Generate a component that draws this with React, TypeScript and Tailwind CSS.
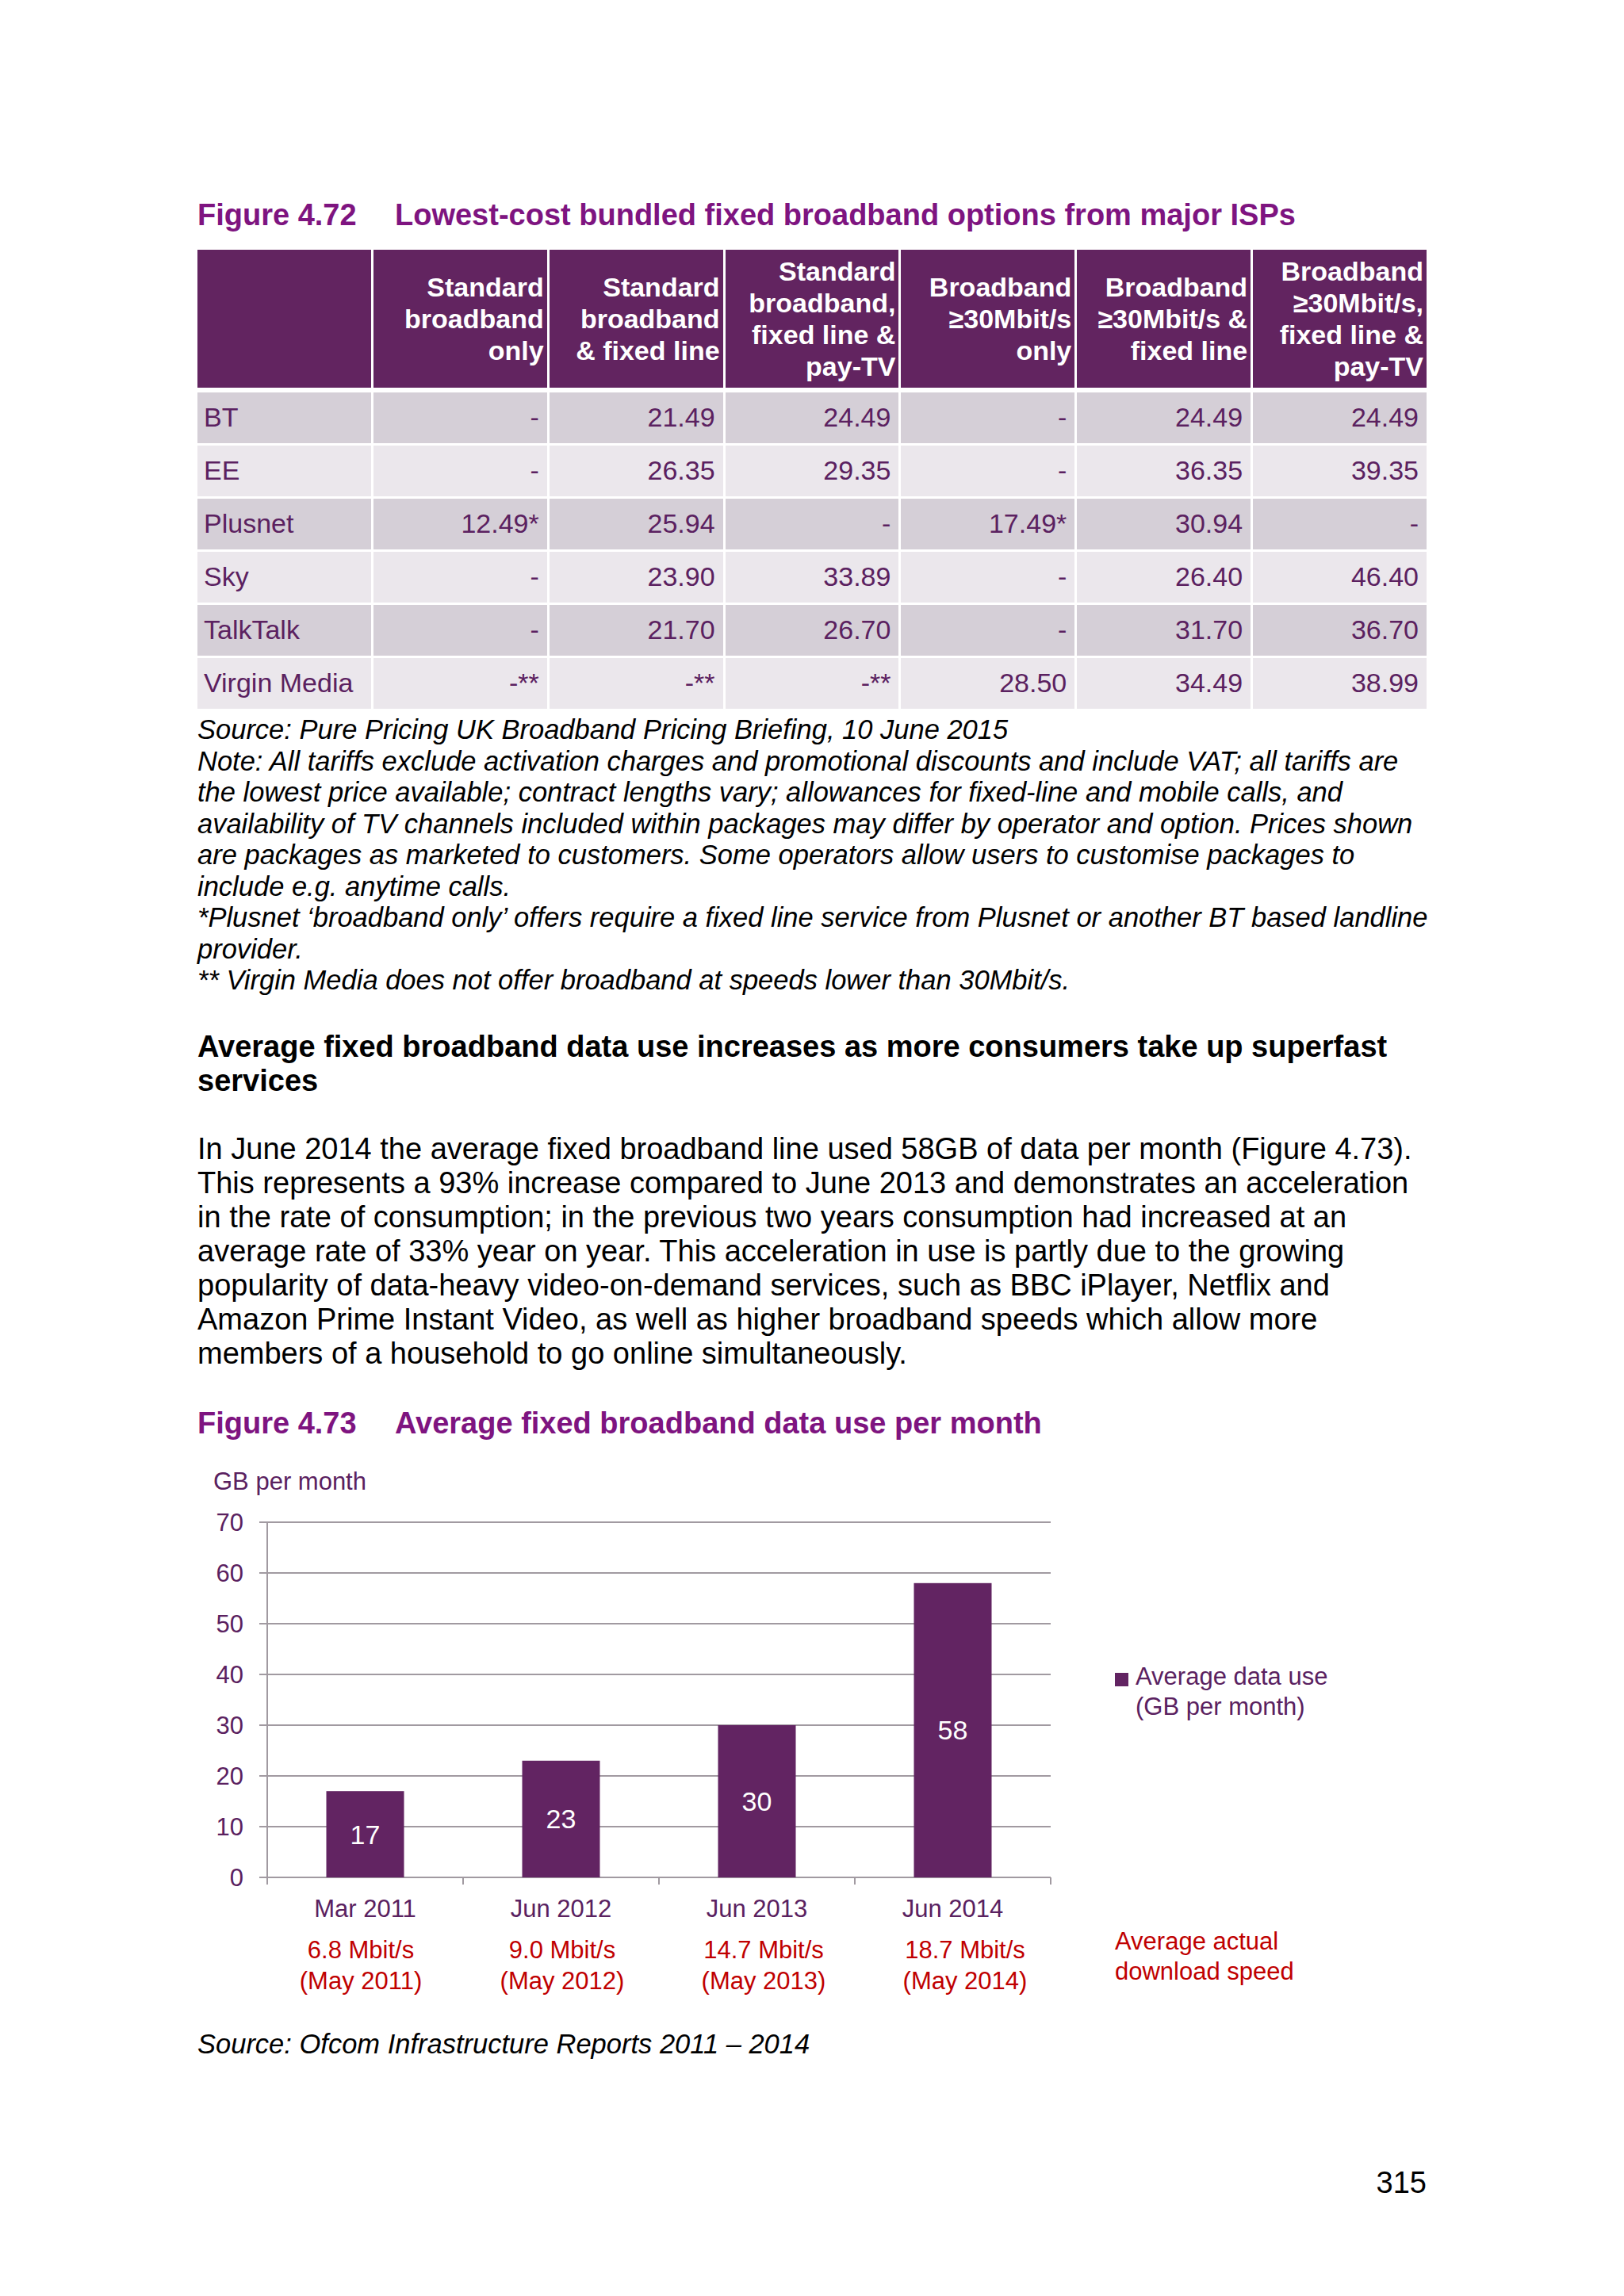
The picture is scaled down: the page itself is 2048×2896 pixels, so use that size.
import React from "react";

const FONT = "font-['Liberation_Sans',Arial,Helvetica,sans-serif]";

const headers: string[][] = [
  ["Standard", "broadband", "only"],
  ["Standard", "broadband", "& fixed line"],
  ["Standard", "broadband,", "fixed line &", "pay-TV"],
  ["Broadband", "≥30Mbit/s", "only"],
  ["Broadband", "≥30Mbit/s &", "fixed line"],
  ["Broadband", "≥30Mbit/s,", "fixed line &", "pay-TV"],
];

const rows: { isp: string; values: string[] }[] = [
  { isp: "BT", values: ["-", "21.49", "24.49", "-", "24.49", "24.49"] },
  { isp: "EE", values: ["-", "26.35", "29.35", "-", "36.35", "39.35"] },
  { isp: "Plusnet", values: ["12.49*", "25.94", "-", "17.49*", "30.94", "-"] },
  { isp: "Sky", values: ["-", "23.90", "33.89", "-", "26.40", "46.40"] },
  { isp: "TalkTalk", values: ["-", "21.70", "26.70", "-", "31.70", "36.70"] },
  { isp: "Virgin Media", values: ["-**", "-**", "-**", "28.50", "34.49", "38.99"] },
];

const notes = [
  "Source: Pure Pricing UK Broadband Pricing Briefing, 10 June 2015",
  "Note: All tariffs exclude activation charges and promotional discounts and include VAT; all tariffs are",
  "the lowest price available; contract lengths vary; allowances for fixed-line and mobile calls, and",
  "availability of TV channels included within packages may differ by operator and option. Prices shown",
  "are packages as marketed to customers. Some operators allow users to customise packages to",
  "include e.g. anytime calls.",
  "*Plusnet \u2018broadband only\u2019 offers require a fixed line service from Plusnet or another BT based landline",
  "provider.",
  "** Virgin Media does not offer broadband at speeds lower than 30Mbit/s.",
];

const bodyLines = [
  "In June 2014 the average fixed broadband line used 58GB of data per month (Figure 4.73).",
  "This represents a 93% increase compared to June 2013 and demonstrates an acceleration",
  "in the rate of consumption; in the previous two years consumption had increased at an",
  "average rate of 33% year on year. This acceleration in use is partly due to the growing",
  "popularity of data-heavy video-on-demand services, such as BBC iPlayer, Netflix and",
  "Amazon Prime Instant Video, as well as higher broadband speeds which allow more",
  "members of a household to go online simultaneously.",
];

const usage = [
  { label: "Mar 2011", value: 17, speed: "6.8 Mbit/s", month: "(May 2011)" },
  { label: "Jun 2012", value: 23, speed: "9.0 Mbit/s", month: "(May 2012)" },
  { label: "Jun 2013", value: 30, speed: "14.7 Mbit/s", month: "(May 2013)" },
  { label: "Jun 2014", value: 58, speed: "18.7 Mbit/s", month: "(May 2014)" },
];

// chart geometry, svg coordinates
const ZERO_Y = 528;
const UNIT = 6.4;
const AXIS_X = 88;
const CAT_W = 247;
const BAR_W = 98;
const GRID = "#a19aa1";
const PURPLE_TEXT = "#5a2160";

function FigureTitle({ num, title }: { num: string; title: string }) {
  return (
    <h2 className="flex text-[38px] leading-[44px] font-bold text-[#7e1480]">
      <span className="w-[249px]">{num}</span>
      <span>{title}</span>
    </h2>
  );
}

function PricingTable() {
  return (
    <div className="mt-[22px] w-[1550px]">
      <div className="grid grid-cols-7 gap-x-[3px] h-[174px]">
        <div className="bg-[#622460]" />
        {headers.map((lines, i) => (
          <div
            key={i}
            className="bg-[#622460] flex flex-col justify-center items-end pr-[4px] text-white font-bold text-[34px] leading-[40px] text-right"
          >
            {lines.map((line) => (
              <span key={line} className="whitespace-nowrap">
                {line}
              </span>
            ))}
          </div>
        ))}
      </div>
      <div className="mt-[6px] flex flex-col gap-y-[3px]">
        {rows.map((row, r) => (
          <div
            key={row.isp}
            className="grid grid-cols-7 gap-x-[3px] h-[64px] text-[34px] leading-[40px] text-[#5b2160]"
          >
            <div
              className={`${r % 2 === 0 ? "bg-[#d5cfd7]" : "bg-[#ebe7ec]"} flex items-center pl-[8px] pb-[3px] whitespace-nowrap`}
            >
              {row.isp}
            </div>
            {row.values.map((v, i) => (
              <div
                key={i}
                className={`${r % 2 === 0 ? "bg-[#d5cfd7]" : "bg-[#ebe7ec]"} flex items-center justify-end pr-[10px] pb-[3px] whitespace-nowrap`}
              >
                {v}
              </div>
            ))}
          </div>
        ))}
      </div>
    </div>
  );
}

function UsageChart() {
  const ticks = [0, 10, 20, 30, 40, 50, 60, 70];
  return (
    <svg width={1157} height={590} className="block">
      <text x={20} y={39} fontSize={31} fill={PURPLE_TEXT}>
        GB per month
      </text>
      {ticks.map((t) => {
        const y = ZERO_Y - t * UNIT;
        return (
          <g key={t}>
            <line x1={78} x2={AXIS_X + CAT_W * 4} y1={y} y2={y} stroke={GRID} strokeWidth={2} />
            <text x={58} y={y + 11} fontSize={31} fill={PURPLE_TEXT} textAnchor="end">
              {t}
            </text>
          </g>
        );
      })}
      <line x1={AXIS_X} x2={AXIS_X} y1={ZERO_Y - 70 * UNIT} y2={ZERO_Y + 9} stroke={GRID} strokeWidth={2} />
      {[0, 1, 2, 3, 4].map((i) => (
        <line
          key={i}
          x1={AXIS_X + CAT_W * i}
          x2={AXIS_X + CAT_W * i}
          y1={ZERO_Y}
          y2={ZERO_Y + 9}
          stroke={GRID}
          strokeWidth={2}
        />
      ))}
      {usage.map((d, i) => {
        const cx = AXIS_X + CAT_W * i + CAT_W / 2;
        const h = d.value * UNIT;
        return (
          <g key={d.label}>
            <rect x={cx - BAR_W / 2} y={ZERO_Y - h} width={BAR_W} height={h} fill="#622462" />
            <text x={cx} y={ZERO_Y - h / 2 + 12} fontSize={34} fill="#ffffff" textAnchor="middle">
              {d.value}
            </text>
            <text x={cx} y={578} fontSize={31} fill={PURPLE_TEXT} textAnchor="middle">
              {d.label}
            </text>
          </g>
        );
      })}
    </svg>
  );
}

export default function App() {
  return (
    <div className={`${FONT} w-[2048px] h-[2896px] bg-white pl-[249px] pt-[249px] text-black`}>
      <FigureTitle num="Figure 4.72" title="Lowest-cost bundled fixed broadband options from major ISPs" />
      <PricingTable />

      <div className="mt-[7px] italic text-[34.5px] leading-[39.5px]">
        {notes.map((line) => (
          <p key={line} className="whitespace-nowrap">
            {line}
          </p>
        ))}
      </div>

      <h3 className="mt-[42px] font-bold text-[38px] leading-[43px]">
        <span className="block whitespace-nowrap">
          Average fixed broadband data use increases as more consumers take up superfast
        </span>
        <span className="block">services</span>
      </h3>

      <div className="mt-[43px] text-[38px] leading-[43px]">
        {bodyLines.map((line) => (
          <p key={line} className="whitespace-nowrap">
            {line}
          </p>
        ))}
      </div>

      <div className="mt-[44px]">
        <FigureTitle num="Figure 4.73" title="Average fixed broadband data use per month" />
      </div>

      <section className="mt-[23px] flex">
        <div className="w-[1157px]">
          <UsageChart />
          <div className="mt-[10px] ml-[79px] w-[1016px] grid grid-cols-4 text-[31px] leading-[39px] text-[#c00000] text-center">
            {usage.map((d) => (
              <div key={d.label} className="flex flex-col">
                <span>{d.speed}</span>
                <span>{d.month}</span>
              </div>
            ))}
          </div>
        </div>
        <div className="pt-[256px] text-[31px] leading-[38px]">
          <div className="flex text-[#5a2160]">
            <span className="mt-[14px] mr-[9px] w-[17px] h-[17px] bg-[#622462] shrink-0" />
            <div className="flex flex-col whitespace-nowrap">
              <span>Average data use</span>
              <span>(GB per month)</span>
            </div>
          </div>
          <div className="mt-[258px] flex flex-col text-[#c00000] whitespace-nowrap">
            <span>Average actual</span>
            <span>download speed</span>
          </div>
        </div>
      </section>

      <p className="mt-[40px] italic text-[34.5px] leading-[40px]">
        Source: Ofcom Infrastructure Reports 2011 – 2014
      </p>

      <p className="mt-[133px] w-[1550px] text-right text-[38px] leading-[44px]">315</p>
    </div>
  );
}
